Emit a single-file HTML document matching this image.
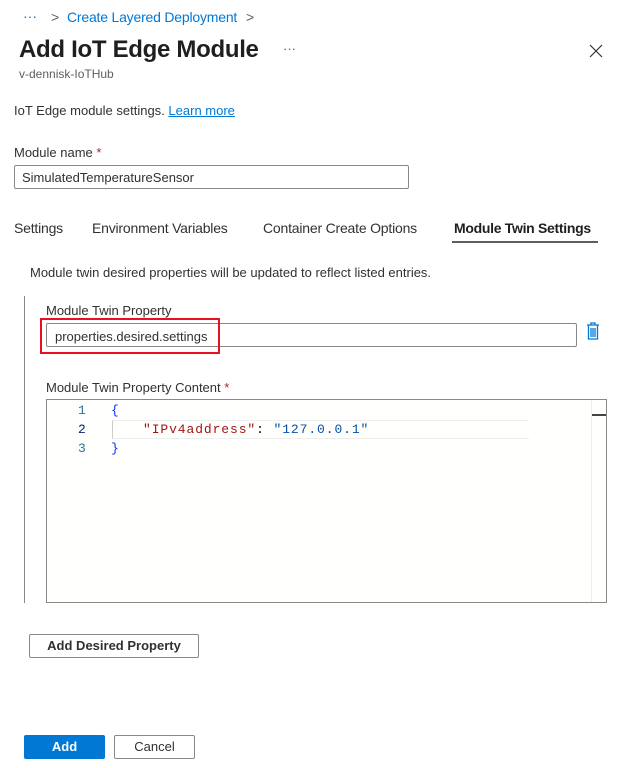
<!DOCTYPE html>
<html><head><style>
*{box-sizing:border-box;margin:0;padding:0}
body{width:632px;height:768px;background:#fff;font-family:"Liberation Sans",sans-serif;color:#323130;position:relative;overflow:hidden;font-size:13px}
.a{position:absolute;white-space:nowrap}
.inp{position:absolute;border:1px solid #8a8886;border-radius:2px;background:#fff}
.btn{position:absolute;border:1px solid #8a8886;border-radius:2px;background:#fff;text-align:center;font-weight:bold;font-size:13px;color:#323130}
.mono{font-family:"Liberation Mono",monospace;font-size:13px;letter-spacing:0.9px}
</style></head><body>
<div class="a" style="left:23px;top:8px;color:#0078d4;font-size:14px">···</div>
<div class="a" style="left:51px;top:9px;color:#605e5c;font-size:14px">&gt;</div>
<div class="a" style="left:67px;top:9px;color:#0078d4;font-size:14px;letter-spacing:-0.2px">Create Layered Deployment</div>
<div class="a" style="left:246px;top:9px;color:#605e5c;font-size:14px">&gt;</div>
<div class="a" style="left:19px;top:36px;font-size:24px;font-weight:bold;color:#201f1e;letter-spacing:-0.3px">Add IoT Edge Module</div>
<div class="a" style="left:283px;top:41px;color:#605e5c;font-size:13px">···</div>
<svg class="a" style="left:589px;top:44px" width="14" height="14"><path d="M1 1L13 13M13 1L1 13" stroke="#323130" stroke-width="1.2"/></svg>
<div class="a" style="left:19px;top:67px;font-size:12px;color:#605e5c">v-dennisk-IoTHub</div>
<div class="a" style="left:14px;top:103px">IoT Edge module settings. <span style="color:#0078d4;text-decoration:underline">Learn more</span></div>
<div class="a" style="left:14px;top:145px">Module name <span style="color:#a4262c">*</span></div>
<div class="inp" style="left:14px;top:165px;width:395px;height:24px"></div>
<div class="a" style="left:22px;top:170px">SimulatedTemperatureSensor</div>
<div class="a" style="left:14px;top:220px;font-size:14px;letter-spacing:-0.2px">Settings</div>
<div class="a" style="left:92px;top:220px;font-size:14px;letter-spacing:-0.2px">Environment Variables</div>
<div class="a" style="left:263px;top:220px;font-size:14px;letter-spacing:-0.2px">Container Create Options</div>
<div class="a" style="left:454px;top:220px;font-size:14px;font-weight:bold;color:#201f1e;letter-spacing:-0.3px">Module Twin Settings</div>
<div class="a" style="left:452px;top:241px;width:146px;height:2px;background:#605e5c"></div>
<div class="a" style="left:30px;top:265px">Module twin desired properties will be updated to reflect listed entries.</div>
<div class="a" style="left:24px;top:296px;width:1px;height:307px;background:#8a8886"></div>
<div class="a" style="left:46px;top:303px">Module Twin Property</div>
<div class="inp" style="left:46px;top:323px;width:531px;height:24px"></div>
<div class="a" style="left:55px;top:329px">properties.desired.settings</div>
<div class="a" style="left:40px;top:318px;width:180px;height:36px;border:2px solid #e81123"></div>
<svg class="a" style="left:586px;top:322px" width="14" height="18"><path d="M1 3H13M5 3V1H9V3M2.5 3V17H11.5V3M5 6V15M7 6V15M9 6V15" stroke="#0078d4" stroke-width="1.3" fill="none"/></svg>
<div class="a" style="left:46px;top:380px">Module Twin Property Content <span style="color:#a4262c">*</span></div>
<div class="a" style="left:46px;top:399px;width:561px;height:204px;border:1px solid #8a8886;background:#fffffe"></div>
<div class="a" style="left:591px;top:400px;width:1px;height:202px;background:#eee"></div>
<div class="a" style="left:592px;top:414px;width:14px;height:2px;background:#444"></div>
<div class="a" style="left:112px;top:420px;width:417px;height:19px;border-top:1px solid #eee;border-bottom:1px solid #eee;border-left:1px solid #ccc"></div>
<div class="a mono" style="left:78px;top:403px;color:#237893">1</div>
<div class="a mono" style="left:78px;top:422px;color:#0b216f">2</div>
<div class="a mono" style="left:78px;top:441px;color:#237893">3</div>
<div class="a mono" style="left:111px;top:403px;color:#0431fa">{</div>
<div class="a mono" style="left:143px;top:422px"><span style="color:#a31515">"IPv4address"</span><span style="color:#000">: </span><span style="color:#0451a5">"127.0.0.1"</span></div>
<div class="a mono" style="left:111px;top:441px;color:#0431fa">}</div>
<div class="btn" style="left:29px;top:634px;width:170px;height:24px;line-height:22px">Add Desired Property</div>
<div class="btn" style="left:24px;top:735px;width:81px;height:24px;line-height:24px;background:#0078d4;border:none;color:#fff">Add</div>
<div class="btn" style="left:114px;top:735px;width:81px;height:24px;line-height:22px;font-weight:normal">Cancel</div>
</body></html>
